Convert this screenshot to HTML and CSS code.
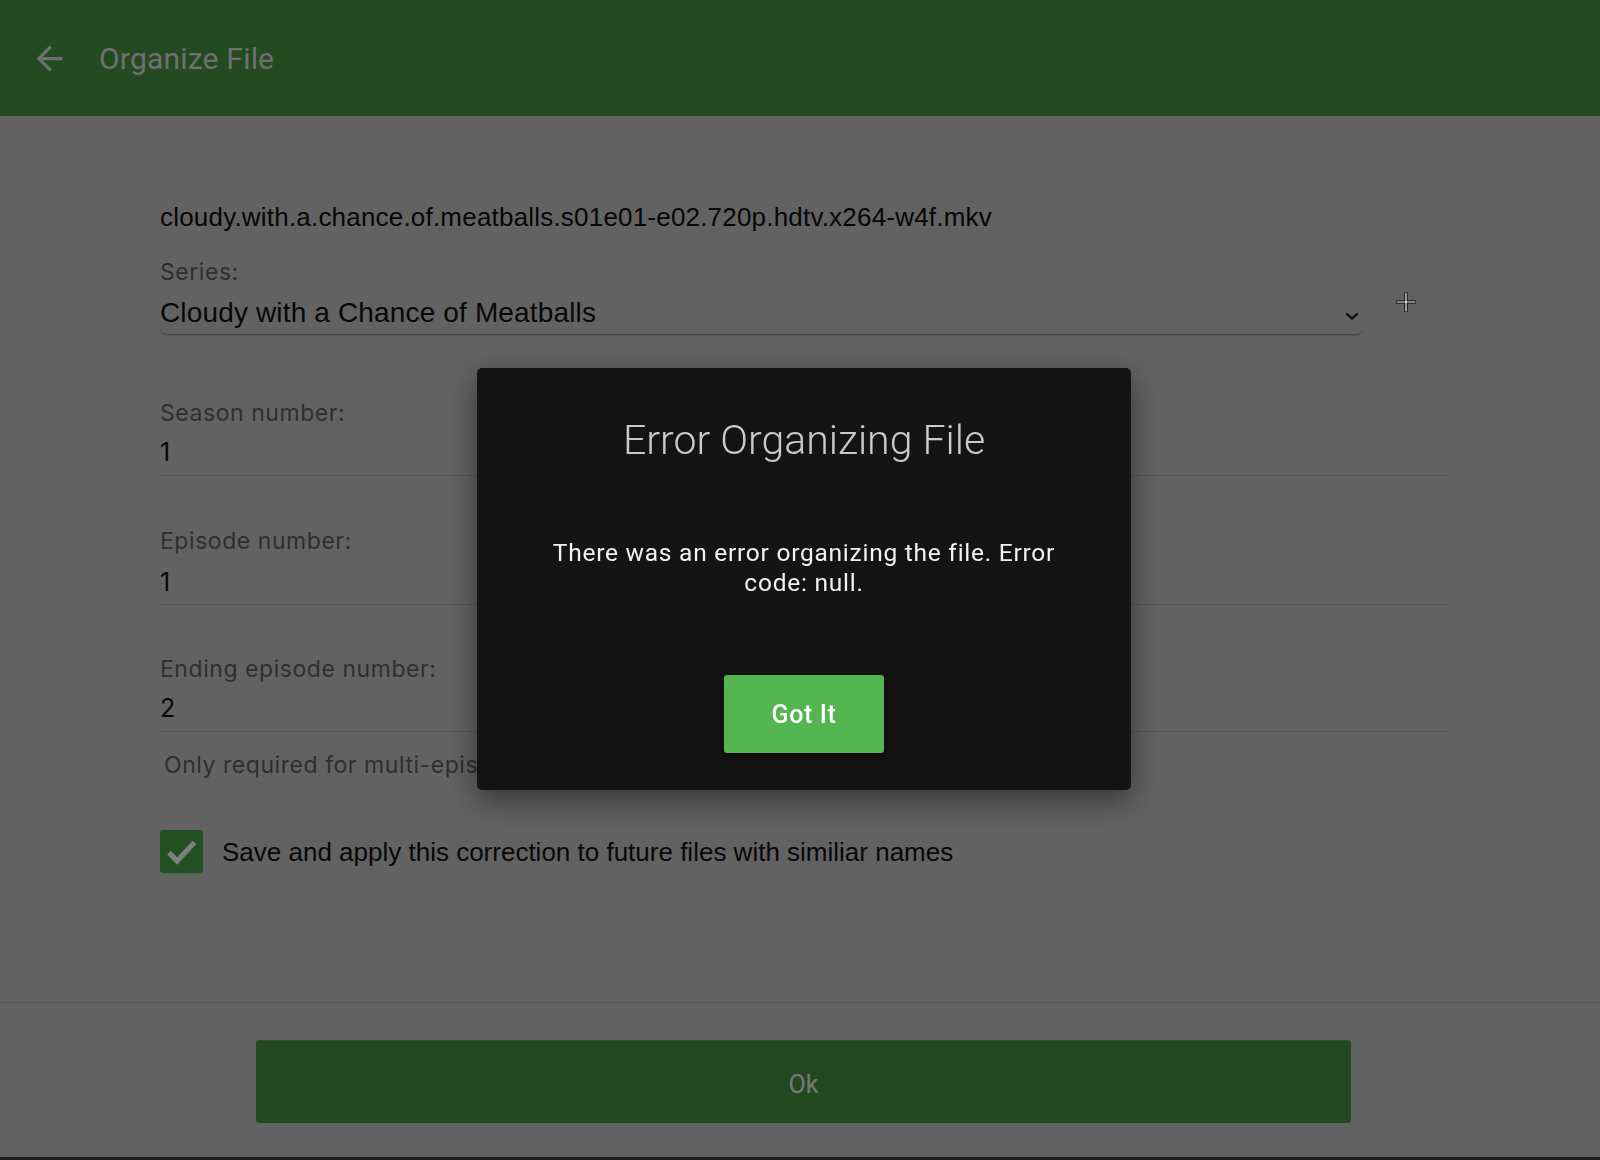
FILE: index.html
```html
<!DOCTYPE html>
<html lang="en">
<head>
<meta charset="utf-8">
<title>Organize File</title>
<link rel="stylesheet" href="styles.css">
</head>
<body>
<header class="appbar">
  <svg class="back" viewBox="0 0 24 24" aria-hidden="true"><path d="M20 11H7.83l5.59-5.59L12 4l-8 8 8 8 1.41-1.41L7.83 13H20v-2z"/></svg>
  <h1 class="appbar-title">Organize File</h1>
</header>

<main class="form">
  <div class="filename">cloudy.with.a.chance.of.meatballs.s01e01-e02.720p.hdtv.x264-w4f.mkv</div>
  <div class="label series-label">Series:</div>
  <div class="series-row">
    <div class="select">
      <span class="select-value">Cloudy with a Chance of Meatballs</span>
      <svg class="chevron" viewBox="0 0 12 7" aria-hidden="true"><path d="M1 1l5 4.5L11 1"/></svg>
    </div>
  </div>

  <div class="field">
    <div class="label">Season number:</div>
    <div class="input">1</div>
  </div>
  <div class="field field-mid">
    <div class="label">Episode number:</div>
    <div class="input">1</div>
  </div>
  <div class="field field-last">
    <div class="label">Ending episode number:</div>
    <div class="input">2</div>
  </div>
  <div class="hint">Only required for multi-episode files</div>

  <div class="check-row">
    <span class="checkbox"><svg viewBox="0 0 43 43" aria-hidden="true"><path d="M9 22.5l8 8.5L34.5 12.5"/></svg></span>
    <span class="check-label">Save and apply this correction to future files with similiar names</span>
  </div>
</main>

<footer class="actions">
  <button class="ok">Ok</button>
</footer>

<div class="backdrop"></div>

<div class="dialog" role="dialog">
  <h2 class="dialog-title">Error Organizing File</h2>
  <p class="dialog-text">There was an error organizing the file. Error code: null.</p>
  <button class="dialog-btn">Got It</button>
</div>

<svg class="cursor" viewBox="0 0 22 22" aria-hidden="true">
  <path class="cursor-outline" d="M11 1v20M1 11h20"/>
  <path class="cursor-core" d="M11 1.5v19M1.5 11h19"/>
</svg>
</body>
</html>
```

FILE: styles.css
```css
* { box-sizing: border-box; }

html, body {
  margin: 0;
  padding: 0;
}

body {
  width: 1600px;
  height: 1160px;
  overflow: hidden;
  background: #c4c4c4;
  display: flex;
  flex-direction: column;
  font-family: "Inter", "Liberation Sans", sans-serif;
  color: #111;
}

/* ---------- app bar ---------- */
.appbar {
  height: 116px;
  flex: 0 0 116px;
  background: #469442;
  display: flex;
  align-items: center;
  padding-left: 30px;
}

.back {
  width: 39px;
  height: 39px;
  fill: #dedede;
  margin-right: 30px;
}

.appbar-title {
  margin: 0;
  font-family: "Roboto", sans-serif;
  font-weight: 400;
  font-size: 30px;
  color: #dedede;
  letter-spacing: 0.2px;
}

/* ---------- form ---------- */
.form {
  flex: 1 1 auto;
  padding: 86px 0 0 160px;
}

.filename {
  font-family: "Liberation Sans", sans-serif;
  font-size: 26px;
  line-height: 30px;
  letter-spacing: 0.2px;
  color: #0e0e0e;
}

.label {
  font-size: 23px;
  line-height: 26px;
  letter-spacing: 0.55px;
  color: #5e5e5e;
}

.series-label {
  margin-top: 27px;
}

.series-row {
  margin-top: 11px;
  display: flex;
}

.select {
  width: 1203px;
  display: flex;
  align-items: center;
  justify-content: space-between;
  padding: 0 5px 4px 0;
  border-bottom: 1px solid #929292;
  border-radius: 0 0 7px 7px;
  box-shadow: 0 1px 1px rgba(0, 0, 0, 0.12);
}

.select-value {
  font-family: "Liberation Sans", sans-serif;
  font-size: 28px;
  line-height: 34px;
  letter-spacing: 0.15px;
  color: #111;
}

.chevron {
  width: 12px;
  height: 7px;
  margin-top: 6px;
  fill: none;
  stroke: #2a2a2a;
  stroke-width: 2.4;
  stroke-linecap: round;
  stroke-linejoin: round;
}

.field {
  width: 1289px;
  margin-top: 52px;
}

.series-row + .field {
  margin-top: 65px;
}

.input {
  font-size: 25px;
  line-height: 30px;
  padding: 11px 0 8px;
  border-bottom: 1px solid #aaaaaa;
  color: #111;
}

.field-mid .input {
  padding: 13px 0 7px;
}

.field-last {
  margin-top: 51px;
}

.hint {
  margin-top: 20px;
  padding-left: 4px;
  font-size: 23px;
  line-height: 26px;
  letter-spacing: 0.55px;
  color: #5e5e5e;
}

.check-row {
  margin-top: 52px;
  display: flex;
  align-items: center;
  gap: 19px;
}

.checkbox {
  width: 43px;
  height: 43px;
  border-radius: 3px;
  background: #46a043;
  display: block;
}

.checkbox svg {
  width: 43px;
  height: 43px;
  display: block;
  fill: none;
  stroke: #ffffff;
  stroke-width: 5;
}

.check-label {
  font-family: "Liberation Sans", sans-serif;
  font-size: 26px;
  line-height: 30px;
  color: #111;
}

/* ---------- footer ---------- */
.actions {
  flex: 0 0 158px;
  border-top: 1px solid #acacac;
  border-bottom: 3px solid #3c3c3c;
  padding: 37px 0 34px 256px;
}

.ok {
  display: block;
  width: 1095px;
  height: 83px;
  border: 0;
  border-radius: 3px;
  background: #44923e;
  box-shadow: inset 0 1px 0 rgba(255, 255, 255, 0.12);
  font-family: "Roboto", sans-serif;
  font-size: 25px;
  color: #eeeeee;
  padding: 5px 0 0;
}

/* ---------- modal ---------- */
.backdrop {
  position: fixed;
  inset: 0;
  background: rgba(0, 0, 0, 0.5);
}

.dialog {
  position: fixed;
  left: 477px;
  top: 368px;
  width: 654px;
  height: 422px;
  background: #141414;
  border-radius: 5px;
  box-shadow: 0 10px 30px rgba(0, 0, 0, 0.45);
  display: flex;
  flex-direction: column;
  align-items: center;
  padding-top: 48px;
  font-family: "Roboto", sans-serif;
}

.dialog-title {
  margin: 0;
  font-weight: 300;
  font-size: 41px;
  line-height: 48px;
  color: #cacaca;
}

.dialog-text {
  margin: 74px 0 0;
  width: 540px;
  text-align: center;
  font-size: 24.5px;
  line-height: 30px;
  color: #f2f2f2;
  letter-spacing: 0.75px;
}

.dialog-btn {
  margin-top: 77px;
  width: 160px;
  height: 78px;
  border: 0;
  border-radius: 3px;
  background: #52b550;
  color: #ffffff;
  font-family: "Roboto", sans-serif;
  font-weight: 500;
  font-size: 25px;
  letter-spacing: 0.6px;
  box-shadow: 0 4px 10px rgba(0, 0, 0, 0.5);
}

.cursor {
  position: fixed;
  left: 1395px;
  top: 291px;
  width: 22px;
  height: 22px;
  fill: none;
}

.cursor-outline {
  stroke: #000;
  stroke-width: 3.2;
}

.cursor-core {
  stroke: #fff;
  stroke-width: 1.2;
}
```
